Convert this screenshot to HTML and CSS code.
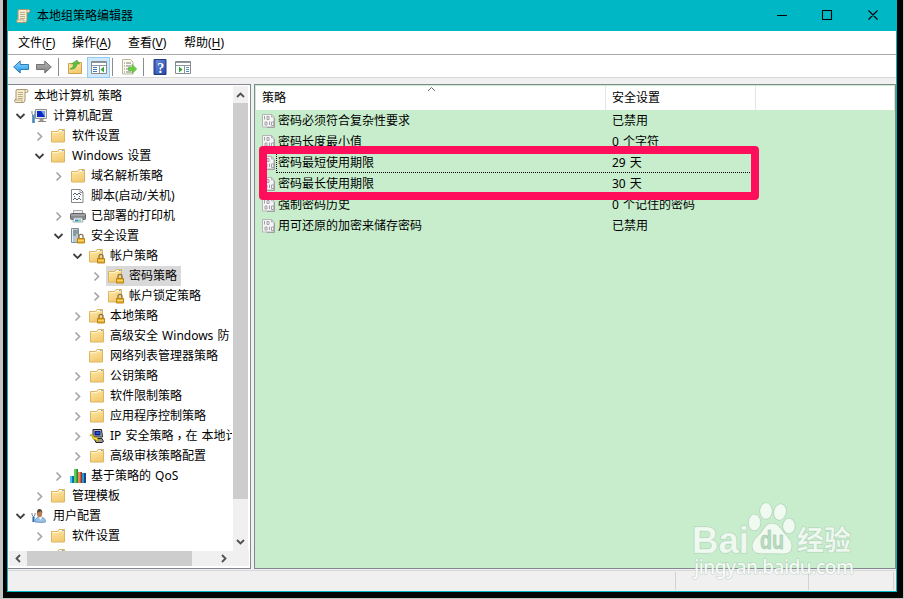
FILE: index.html
```html
<!DOCTYPE html>
<html lang="zh-CN">
<head>
<meta charset="utf-8">
<title>本地组策略编辑器</title>
<link rel="stylesheet" href="styles.css">
</head>
<body>
<svg class="defs" aria-hidden="true">
  <defs>
    <linearGradient id="gFolder" x1="0" y1="0" x2="0.4" y2="1"><stop offset="0" stop-color="#ffebaa"/><stop offset="1" stop-color="#f3cb72"/></linearGradient>
    <linearGradient id="gBlue" x1="0" y1="0" x2="0" y2="1"><stop offset="0" stop-color="#8fdcff"/><stop offset="1" stop-color="#1e96ea"/></linearGradient>
    <linearGradient id="gGray" x1="0" y1="0" x2="0" y2="1"><stop offset="0" stop-color="#b5b5b5"/><stop offset="1" stop-color="#808080"/></linearGradient>
    <linearGradient id="gHelp" x1="0" y1="0" x2="1" y2="1"><stop offset="0" stop-color="#6f91dd"/><stop offset="1" stop-color="#2345a8"/></linearGradient>
  </defs>
  <symbol id="right" viewBox="0 0 14 16"><path d="M5.500 4.500l4 4-4 4" fill="none" stroke="#a6a6a6" stroke-width="1.700"/></symbol>
  <symbol id="down" viewBox="0 0 14 16"><path d="M3.500 6l4 4 4-4" fill="none" stroke="#404040" stroke-width="1.800"/></symbol>
  <symbol id="folder" viewBox="0 0 16 16"><path d="M1.500 3.500h6l1.500-2h5.500v12.500h-13z" fill="url(#gFolder)" stroke="#dcb463"/><path d="M2 4.500h6.500L10 3h4" fill="none" stroke="#fff3c8"/><path d="M9.500 2.500h2.500" stroke="#fff"/><path d="M12 2.500h1.500" stroke="#5aa7dc"/></symbol>
  <symbol id="lock" viewBox="0 0 16 16"><path d="M10 10V8.300a2 2 0 0 1 4 0V10" fill="none" stroke="#88714a" stroke-width="1.300"/><path d="M8.500 10.500h7v4.500h-7z" fill="#e9b130" stroke="#b98518"/><path d="M9 12.500h6" stroke="#f8d66b"/></symbol>
  <symbol id="sfolder" viewBox="0 0 16 16"><path d="M.5 3.500h6l1.500-2h5.500v12.500H.5z" fill="url(#gFolder)" stroke="#dcb463"/><path d="M1 4.500h6.500L9 3h4" fill="none" stroke="#fff3c8"/><path d="M8.500 2.500H11" stroke="#fff"/><path d="M11 2.500h1.500" stroke="#5aa7dc"/><use href="#lock"/></symbol>
  <symbol id="scroll" viewBox="0 0 16 16"><path d="M4 1.500h9.500a1.500 1.500 0 0 1 0 3H12V12q0 2.500-2 2.500H2.500q-1.500-1-.5-3h1V3Q3 1.500 4 1.500z" fill="#f7edcd" stroke="#a89674"/><path d="M2 12h7v2.500M12 4.500V2M5 4.500h5M5 6.500h5M5 8.500h5M5 10.500h5" fill="none" stroke="#b3a687" stroke-width=".9"/></symbol>
  <symbol id="computer" viewBox="0 0 16 16"><path d="M4.500 1.500h11v9h-11z" fill="#e7e8e6" stroke="#8b9298"/><path d="M6 3h8v6H6z" fill="#0825c5"/><path d="M10 3h4v6z" fill="#719de7"/><path d="M8.500 11h4v2h-4z" fill="#999"/><path d="M7 13.500h8" stroke="#888"/><path d="M1 3v3l1.500 1.500L4 6V3" fill="none" stroke="#788995"/><path d="M2.500 7v8" stroke="#4c86b4" stroke-width="2.600"/></symbol>
  <symbol id="script" viewBox="0 0 16 16"><path d="M2.500 1.500h9l2.500 2.500v10.500h-11.500z" fill="#fff" stroke="#858585"/><path d="M11 2v2.500h3" fill="none" stroke="#999"/><path d="M5 5.500h2M9 5.500h2M4 6.500h1M7 6.500h2M11 6.500h1M5 8.500h1M10 8.500h1M5 10.500h2M9 10.500h2M4 11.500h1M7 11.500h2M11 11.500h1" stroke="#526071"/></symbol>
  <symbol id="printer" viewBox="0 0 16 16"><path d="M3.500 2.500h9v4h-9z" fill="#eee" stroke="#aaa"/><rect x=".5" y="5.500" width="15" height="6" rx="1" fill="#86898c" stroke="#626568"/><path d="M1 7h14" stroke="#b9bcc0"/><path d="M4 10h8l1 4H3z" fill="#f4f9ff" stroke="#aaa"/><path d="M5 12.500h3" stroke="#2f94d8" stroke-width="2"/><path d="M8 12.500h3" stroke="#7cc6a6" stroke-width="2"/></symbol>
  <symbol id="server" viewBox="0 0 16 16"><path d="M1.500.5h7v14h-7z" fill="#b9c8ce" stroke="#7c8d95"/><path d="M3 3h5M3 5h5M3 7h3" stroke="#5b6c75"/><path d="M2.500 1v13" stroke="#e6f0f4"/><use href="#lock" x="-1"/></symbol>
  <symbol id="ip" viewBox="0 0 16 16"><path d="M4 1.500h8.500l1 7.500H4z" fill="#b7b7ae" stroke="#222"/><path d="M5.500 3h6v4.500h-6z" fill="#0b1c9c"/><path d="M7 4.500h3.500v1H7z" fill="#3c94e8"/><path d="M5 10.500h8l1.500 3-1.500 1H7z" fill="#9c9c96" stroke="#222"/><path d="M.8 7.500L3 6l2 3 3.500 1 1 4-2.500-2-3-1-1-3z" fill="#ffe727" stroke="#988600" stroke-width=".6"/></symbol>
  <symbol id="qos" viewBox="0 0 16 16"><path d="M0 8h4v7H0z" fill="#176bb4"/><path d="M0 8h2v7H0z" fill="#3fc4ef"/><path d="M4 1h4v14H4z" fill="#218c2f"/><path d="M4 1h2.500v14H4z" fill="#60cf51"/><path d="M8 4h4v11H8z" fill="#8d3829"/><path d="M8 4h2.500v11H8z" fill="#ef8262"/><path d="M12 5h4v10h-4z" fill="#154d83"/><path d="M12 5h2v10h-2z" fill="#2995d5"/></symbol>
  <symbol id="user" viewBox="0 0 16 16"><path d="M4 14q0-5 5-5 5.500 0 5.500 5-2 1-10.500 0z" fill="#9ac0e7" stroke="#5f88b8" stroke-width=".7"/><path d="M7.500 9l2 3 1.500-3z" fill="#fff"/><ellipse cx="8.500" cy="5.500" rx="2.600" ry="3.800" fill="#b77b51"/><path d="M6 5q0-4 2.500-4T11.500 5l-2-2z" fill="#534334"/><path d="M1 5v2l1.500 1.500L4 7V5" fill="none" stroke="#788995"/><path d="M2.500 8.500V14" stroke="#3474ae" stroke-width="2.200"/></symbol>
  <symbol id="policy" viewBox="0 0 14 16"><path d="M.5 1.500h9L12 4v10H.5z" fill="#f5f5f5" stroke="#b5b5b5"/><path d="M9.500 1.500V4H12" fill="none" stroke="#b5b5b5"/><path d="M2.500 3v3.500M5 3.500h2v3H5zM3 9h2v3H3zM7.500 8.500V12M9.500 9H12v3.500H9.500z" fill="none" stroke="#a49fa8"/><path d="M12.500 5v9.500H5" fill="none" stroke="#a0a0a0"/></symbol>
</svg>

<main class="window">
  <header class="titlebar">
    <svg class="appicon"><use href="#scroll"/></svg>
    <span class="title">本地组策略编辑器</span>
    <svg class="controls" viewBox="0 0 106 16"><path d="M2 7.500h10M47.500 2.500h9v9h-9zM93.500 2.500l9 9M102.500 2.500l-9 9" fill="none" stroke="#000" stroke-width="1.100"/></svg>
  </header>
  <nav class="menu"><span>文件(<u>F</u>)</span><span>操作(<u>A</u>)</span><span>查看(<u>V</u>)</span><span>帮助(<u>H</u>)</span></nav>
  <div class="toolbar">
    <svg class="tool" viewBox="0 0 16 16"><path d="M.7 8l6.500-6v3.500h8.300v5H7.200V14z" fill="url(#gBlue)" stroke="#2e7cb8"/></svg>
    <svg class="tool arrow" viewBox="0 0 16 16"><path d="M15.300 8L8.800 2v3.500H.5v5h8.300V14z" fill="url(#gGray)" stroke="#737373"/></svg>
    <i class="sep"></i>
    <svg class="tool up" viewBox="0 0 16 16"><path d="M1.500 4.500h7l1-1h5v11h-13z" fill="url(#gFolder)" stroke="#cda14f"/><path d="M3 10q3.500-1 4-5H4.500L10 1.200 12.500 5H10q-1 6-7 5z" fill="#58c43b" stroke="#4a9c35" stroke-width=".7"/></svg>
    <span class="pressed"><svg class="tool" viewBox="0 0 16 16"><path d="M.5 2.500h15v12H.5z" fill="#fff" stroke="#858b91"/><path d="M1 3.500h14M1 6.500h14M8.500 7v7" stroke="#8f969c"/><path d="M2 8.500h4M2 10.500h4M2 12.500h4" stroke="#4279b7"/><path d="M13 7.500v6l-3.500-3z" fill="#32a536"/></svg></span>
    <i class="sep two"></i>
    <svg class="tool export" viewBox="0 0 16 16"><path d="M1.500.5h8L12 3v12H1.500z" fill="#fffdea" stroke="#bab49b"/><path d="M3 4h1M5 4h5M3 7h1M5 7h5M3 10h1M5 10h3M3 13h1M5 13h5" stroke="#777991"/><path d="M7.500 8.500H11V5.500l4.700 4.500-4.700 4.500v-3H7.500z" fill="#67cf40" stroke="#56ad38" stroke-width=".7"/></svg>
    <i class="sep three"></i>
    <svg class="tool help" viewBox="0 0 16 16"><path d="M2 .5h12v15H2z" fill="url(#gHelp)" stroke="#233a83"/><path d="M3 1v14" stroke="#263f93"/><text x="8.800" y="13.500" text-anchor="middle">?</text></svg>
    <svg class="tool last" viewBox="0 0 16 16"><path d="M.5 2.500h15v12H.5z" fill="#fff" stroke="#858b91"/><path d="M1 3.500h14M1 6.500h14M9.500 7v7" stroke="#8f969c"/><path d="M11 8.500h3M11 10.500h3M11 12.500h3" stroke="#5b8fb5"/><path d="M4 7.500v6l3.500-3z" fill="#32a536"/></svg>
  </div>

  <section class="workspace">
    <aside class="treepane">
      <div class="tree">
        <div class="row root"><svg class="ic"><use href="#scroll"/></svg><span>本地计算机 策略</span></div>
        <div class="row l1"><svg class="ch"><use href="#down"/></svg><svg class="ic"><use href="#computer"/></svg><span>计算机配置</span></div>
        <div class="row l2"><svg class="ch"><use href="#right"/></svg><svg class="ic"><use href="#folder"/></svg><span>软件设置</span></div>
        <div class="row l2"><svg class="ch"><use href="#down"/></svg><svg class="ic"><use href="#folder"/></svg><span>Windows 设置</span></div>
        <div class="row l3"><svg class="ch"><use href="#right"/></svg><svg class="ic"><use href="#folder"/></svg><span>域名解析策略</span></div>
        <div class="row l3 leaf"><i class="ch"></i><svg class="ic"><use href="#script"/></svg><span>脚本(启动/关机)</span></div>
        <div class="row l3"><svg class="ch"><use href="#right"/></svg><svg class="ic"><use href="#printer"/></svg><span>已部署的打印机</span></div>
        <div class="row l3"><svg class="ch"><use href="#down"/></svg><svg class="ic"><use href="#server"/></svg><span>安全设置</span></div>
        <div class="row l4"><svg class="ch"><use href="#down"/></svg><svg class="ic"><use href="#sfolder"/></svg><span>帐户策略</span></div>
        <div class="row l5"><svg class="ch"><use href="#right"/></svg><div class="hit"><svg class="ic"><use href="#sfolder"/></svg><span>密码策略</span></div></div>
        <div class="row l5"><svg class="ch"><use href="#right"/></svg><svg class="ic"><use href="#sfolder"/></svg><span>帐户锁定策略</span></div>
        <div class="row l4"><svg class="ch"><use href="#right"/></svg><svg class="ic"><use href="#sfolder"/></svg><span>本地策略</span></div>
        <div class="row l4"><svg class="ch"><use href="#right"/></svg><svg class="ic"><use href="#folder"/></svg><span>高级安全 Windows 防</span></div>
        <div class="row l4 leaf"><i class="ch"></i><svg class="ic"><use href="#folder"/></svg><span>网络列表管理器策略</span></div>
        <div class="row l4"><svg class="ch"><use href="#right"/></svg><svg class="ic"><use href="#folder"/></svg><span>公钥策略</span></div>
        <div class="row l4"><svg class="ch"><use href="#right"/></svg><svg class="ic"><use href="#folder"/></svg><span>软件限制策略</span></div>
        <div class="row l4"><svg class="ch"><use href="#right"/></svg><svg class="ic"><use href="#folder"/></svg><span>应用程序控制策略</span></div>
        <div class="row l4"><svg class="ch"><use href="#right"/></svg><svg class="ic"><use href="#ip"/></svg><span>IP 安全策略<em lang="zh-TW">，</em>在 本地计</span></div>
        <div class="row l4"><svg class="ch"><use href="#right"/></svg><svg class="ic"><use href="#folder"/></svg><span>高级审核策略配置</span></div>
        <div class="row l3"><svg class="ch"><use href="#right"/></svg><svg class="ic"><use href="#qos"/></svg><span>基于策略的 QoS</span></div>
        <div class="row l2"><svg class="ch"><use href="#right"/></svg><svg class="ic"><use href="#folder"/></svg><span>管理模板</span></div>
        <div class="row l1"><svg class="ch"><use href="#down"/></svg><svg class="ic"><use href="#user"/></svg><span>用户配置</span></div>
        <div class="row l2"><svg class="ch"><use href="#right"/></svg><svg class="ic"><use href="#folder"/></svg><span>软件设置</span></div>
        <div class="row l2"><i class="ch"></i><svg class="ic"><use href="#folder"/></svg></div>
      </div>
      <div class="vscroll">
        <svg viewBox="0 0 15 17"><path d="M4 11l3.500-3.500L11 11" /></svg>
        <div class="vthumb"></div>
        <svg viewBox="0 0 15 17"><path d="M4 6l3.500 3.500L11 6" /></svg>
      </div>
      <div class="hscroll">
        <svg viewBox="0 0 17 15"><path d="M11 4L7.500 7.500 11 11"/></svg>
        <div class="hthumb"></div>
        <svg viewBox="0 0 17 15"><path d="M6 4l3.500 3.500L6 11"/></svg>
      </div>
    </aside>

    <section class="listpane">
      <div class="columns"><span>策略<svg class="sort" viewBox="0 0 9 6"><path d="M1 5l3.500-3.500L8 5" fill="none" stroke="#666"/></svg></span><span>安全设置</span><span></span></div>
      <div class="item"><svg><use href="#policy"/></svg><span>密码必须符合复杂性要求</span><b>已禁用</b></div>
      <div class="item"><svg><use href="#policy"/></svg><span>密码长度最小值</span><b>0 个字符</b></div>
      <div class="item focused"><svg><use href="#policy"/></svg><span>密码最短使用期限</span><b>29 天</b></div>
      <div class="item"><svg><use href="#policy"/></svg><span>密码最长使用期限</span><b>30 天</b></div>
      <div class="item"><svg><use href="#policy"/></svg><span>强制密码历史</span><b>0 个记住的密码</b></div>
      <div class="item"><svg><use href="#policy"/></svg><span>用可还原的加密来储存密码</span><b>已禁用</b></div>
    </section>
  </section>
  <footer class="status"><i></i><i></i><i></i></footer>
</main>
<div class="highlight"></div>
<svg class="watermark" viewBox="0 0 180 90">
  <g class="mark">
    <text class="bai" x="2" y="52.500" textLength="57" lengthAdjust="spacingAndGlyphs">Bai</text>
    <ellipse cx="64.500" cy="22.500" rx="6" ry="8"/><ellipse cx="76" cy="11" rx="6" ry="8"/><ellipse cx="90" cy="12" rx="6" ry="8" transform="rotate(12 90 12)"/><ellipse cx="99" cy="26" rx="6" ry="7.500"/>
    <path d="M81.500 23.500c7 0 9 5 13 10 5 5 8 9 7 14-1 8-8 6-20 6s-18 1-19-6c-1-6 3-9 8-14 4-5 5-10 11-10z"/>
    <text class="exp" x="107" y="50" textLength="54" lengthAdjust="spacingAndGlyphs">经验</text>
    <text class="url" x="4" y="74" textLength="160">jingyan.baidu.com</text>
  </g>
  <text class="du" x="70" y="48.500" textLength="24" lengthAdjust="spacingAndGlyphs">du</text>
</svg>
</body>
</html>
```
FILE: styles.css
```css
* { box-sizing: border-box; }
body {
  margin: 0;
  width: 904px;
  height: 599px;
  overflow: hidden;
  position: relative;
  background: #030303;
  border: solid #c4c4c4;
  border-width: 0 1px 1px 3px;
  font: 12px/20px "Noto Sans", "Noto Sans CJK SC", sans-serif;
  word-spacing: 1px;
  color: #000;
}
svg { display: block; flex: none; }
.defs { position: absolute; width: 0; height: 0; }
.window {
  width: 890px;
  height: 592px;
  margin-left: 4px;
  border: solid #00b7c5;
  border-width: 0 1px 1px;
  background: #f0f0f0;
  display: flex;
  flex-direction: column;
}
.titlebar {
  height: 31px;
  flex: none;
  display: flex;
  align-items: center;
  background: #00b7c5;
  padding: 0 15px 0 7px;
}
.appicon { width: 16px; height: 16px; }
.title { margin-left: 6px; flex: 1; }
.controls { width: 106px; height: 16px; }
.menu {
  height: 24px;
  flex: none;
  display: flex;
  align-items: center;
  padding-left: 10px;
  background: #fff;
  border-bottom: 1px solid #aaa;
}
.menu span { width: 56px; white-space: nowrap; }
.menu span:first-child { width: 54px; }
.menu u { text-underline-offset: 2px; }
.toolbar {
  height: 23px;
  flex: none;
  display: flex;
  align-items: center;
  background: #fff;
  border-bottom: 1px solid #d8d8d8;
  padding: 2px 0 0 5px;
}
.tool { width: 16px; height: 16px; }
.arrow { margin-left: 7px; }
.sep { width: 1px; height: 18px; background: #8c8c8c; margin-left: 6px; }
.up { margin-left: 8px; }
.pressed {
  width: 23px;
  height: 21px;
  margin-left: 4px;
  padding: 1px 3px;
  background: #d0e8fb;
  border: 1px solid #94cbf4;
}
.two { margin-left: 2px; }
.export { margin-left: 8px; }
.three { margin-left: 6px; }
.help { margin-left: 8px; }
.help text { font: bold 14px "Liberation Serif", serif; fill: #fff; }
.last { margin-left: 7px; }
.workspace {
  height: 485px;
  margin-top: 6px;
  flex: none;
  display: flex;
  gap: 3px;
}
.treepane {
  width: 243px;
  border: solid #828790;
  border-width: 1px 1px 1px 0;
  background: #fff;
  display: grid;
  grid-template-columns: 225px 15px;
  grid-template-rows: 465px 15px;
  padding-top: 1px;
}
.tree { overflow: hidden; padding-left: 1px; border-right: 1px solid #fff; }
.row { height: 20px; display: flex; align-items: center; white-space: nowrap; }
.row span { flex: none; }
.row em {
  font-style: normal;
  font-family: "Noto Sans CJK TC", sans-serif;
  line-height: 0;
  vertical-align: -3px;
}
.ch { width: 14px; height: 16px; flex: none; margin-right: 4px; }
.ic { width: 16px; height: 16px; margin-right: 6px; }
.root { padding-left: 4px; }
.root .ic { margin-right: 5px; }
.l1 { padding-left: 4px; }
.l2 { padding-left: 23px; }
.l3 { padding-left: 42px; }
.l4 { padding-left: 61px; }
.l5 { padding-left: 80px; }
.l3 .ic, .l4 .ic, .l5 .ic { margin: 0 5px 0 1px; }
.leaf .ic { margin: 0 6px 0 0; }
.hit {
  display: flex;
  align-items: center;
  height: 20px;
  background: #d9d9d9;
  margin-left: -1px;
  padding: 0 4px 0 1px;
}
.vscroll { background: #f0f0f0; display: flex; flex-direction: column; }
.vscroll svg { width: 15px; height: 17px; }
.vscroll path, .hscroll path { fill: none; stroke: #505050; stroke-width: 1.8; }
.vthumb { height: 396px; background: #cdcdcd; margin-bottom: 35px; }
.hscroll { background: #f0f0f0; display: flex; width: 240px; margin-left: 1px; }
.hscroll svg { width: 17px; height: 15px; }
.hthumb { width: 165px; background: #cdcdcd; margin: 0 24px 0 1px; }
.listpane {
  width: 642px;
  background: #c7edcc;
  border: 1px solid #828790;
  padding: 1px;
}
.columns { height: 24px; display: flex; background: #fff; line-height: 24px; }
.columns span { display: flex; padding-left: 6px; border-right: 1px solid #e4e4e4; }
.columns span:nth-child(1) { width: 350px; }
.columns span:nth-child(2) { width: 150px; }
.columns span:nth-child(3) { border: 0; }
.sort { width: 9px; height: 6px; margin-left: 141px; }
.item { height: 21px; display: flex; align-items: center; padding-left: 6px; line-height: 21px; }
.item svg { width: 14px; height: 16px; }
.item span { width: 332px; margin-left: 2px; }
.item b { font-weight: normal; margin-left: 2px; }
.focused span { position: relative; }
.focused span::before {
  content: "";
  position: absolute;
  left: -2px;
  top: -2px;
  width: 476px;
  height: 21px;
  border: 1px dotted #000;
}
.status {
  height: 21px;
  margin-top: 1px;
  border-top: 1px solid #d7d7d7;
  display: flex;
  padding: 1px 2px 1px 667px;
}
.status i { border-left: 1px solid #d2d2d2; width: 133px; }
.status i:nth-child(2) { width: 85px; }
.status i:last-child { width: 1px; }
.highlight {
  position: absolute;
  left: 256px;
  top: 146px;
  width: 500px;
  height: 54px;
  border: 8px solid #ff0f5b;
  border-radius: 4px;
}
.watermark { position: absolute; left: 687px; top: 500px; width: 180px; height: 90px; }
.mark { fill: #fff; fill-opacity: .73; stroke: #8fae99; stroke-opacity: .45; stroke-width: 1.2; paint-order: stroke; }
.bai, .du { font: bold 36px "Liberation Sans", sans-serif; }
.du { font-size: 25px; fill: #b9dcc0; stroke: #9fbea6; stroke-width: .5; }
.exp { font: bold 27px "Noto Sans CJK SC", sans-serif; }
.url { font: 500 19px "Noto Sans", sans-serif; fill-opacity: .9; }
```
